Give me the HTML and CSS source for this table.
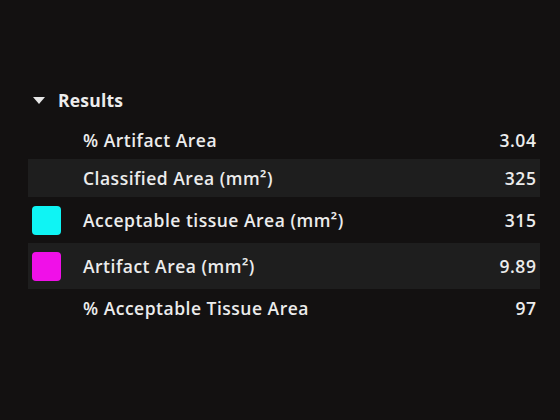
FILE: index.html
```html
<!DOCTYPE html>
<html>
<head>
<meta charset="utf-8">
<link rel="stylesheet" href="styles.css">
</head>
<body>
<div class="panel">
  <div class="header">
    <span class="caret"></span>
    <span class="title">Results</span>
  </div>
  <div class="rows">
    <div class="row">
      <span class="swatch-slot"></span>
      <span class="label">% Artifact Area</span>
      <span class="value">3.04</span>
    </div>
    <div class="row alt">
      <span class="swatch-slot"></span>
      <span class="label">Classified Area (mm²)</span>
      <span class="value">325</span>
    </div>
    <div class="row tall">
      <span class="swatch-slot"><span class="swatch cyan"></span></span>
      <span class="label">Acceptable tissue Area (mm²)</span>
      <span class="value">315</span>
    </div>
    <div class="row tall alt">
      <span class="swatch-slot"><span class="swatch magenta"></span></span>
      <span class="label">Artifact Area (mm²)</span>
      <span class="value">9.89</span>
    </div>
    <div class="row">
      <span class="swatch-slot"></span>
      <span class="label">% Acceptable Tissue Area</span>
      <span class="value">97</span>
    </div>
  </div>
</div>
</body>
</html>
```
FILE: styles.css
```css
html, body {
  margin: 0;
  padding: 0;
  background: #131111;
  width: 560px;
  height: 420px;
  overflow: hidden;
}
body {
  font-family: "Open Sans", Lato, sans-serif;
  color: #ececec;
}
.panel {
  padding: 88px 20px 0 28px;
}
.header {
  display: flex;
  align-items: center;
  height: 24px;
  margin-bottom: 9px;
}
.caret {
  width: 0;
  height: 0;
  border-left: 6px solid transparent;
  border-right: 6px solid transparent;
  border-top: 7px solid #e6e6e6;
  margin-left: 5px;
  margin-right: 13px;
}
.title {
  font-weight: 700;
  font-size: 17.5px;
  letter-spacing: 0.2px;
}
.rows {
  display: flex;
  flex-direction: column;
}
.row {
  display: flex;
  align-items: center;
  height: 38px;
  font-size: 17.5px;
  font-weight: 600;
  letter-spacing: 0.5px;
}
.row.tall {
  height: 46px;
}
.row.alt {
  background: #1e1e1e;
}
.swatch-slot {
  width: 51px;
  display: flex;
  align-items: center;
  padding-left: 4px;
}
.swatch {
  width: 29px;
  height: 29px;
  border-radius: 4px;
}
.swatch.cyan { background: #0ff4f4; }
.swatch.magenta { background: #f010e8; }
.label {
  flex: 1;
}
.value {
  padding-right: 4px;
  letter-spacing: 0.6px;
  margin-right: -0.6px;
}
```
